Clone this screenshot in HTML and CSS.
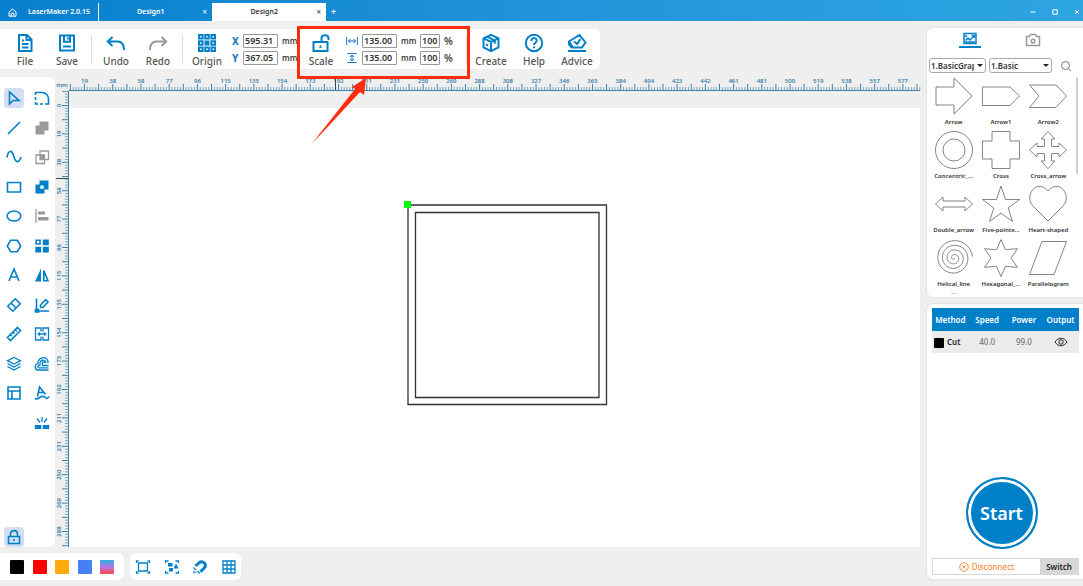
FILE: index.html
```html
<!DOCTYPE html>
<html lang="en">
<head>
<meta charset="utf-8">
<title>LaserMaker 2.0.15</title>
<link rel="stylesheet" href="styles.css">
</head>
<body>
<header class="titlebar">
  <div class="brand"><svg class="home" viewBox="0 0 9 9"><path d="M1 4 4.500 1 8 4v4.200H1zM3.200 8V5.200h2.600V8"/></svg><span>LaserMaker 2.0.15</span></div>
  <nav class="tabs">
    <div class="tab"><span>Design1</span><button class="close" aria-label="Close Design1">×</button></div>
    <div class="tab active"><span>Design2</span><button class="close" aria-label="Close Design2">×</button></div>
    <button class="add" aria-label="New design">+</button>
  </nav>
  <div class="window-buttons">
    <button aria-label="Minimize"><svg viewBox="0 0 6 6"><path d="M.5 3h5"/></svg></button>
    <button aria-label="Maximize"><svg viewBox="0 0 6 6"><path d="M.8.8h4.400v4.400H.8z"/></svg></button>
    <button aria-label="Close"><svg viewBox="0 0 6 6"><path d="m1 1 4 4M5 1 1 5"/></svg></button>
  </div>
</header>

<div class="app">
  <div class="main">
    <div class="toolbar">
      <button class="tool"><svg viewBox="0 0 20 20"><path d="M4 2h8l4.500 4.500V18H4zM11.500 2v5H16M7 7.500h2M7 11h6.500M7 14.500h6.500"/></svg><span>File</span></button>
      <button class="tool"><svg viewBox="0 0 20 20"><path d="M3 2.500h14v15H3zM7 2.500v6.300h6V2.500M10.800 4.500v2M6 13.500h8"/></svg><span>Save</span></button>
      <i class="divider"></i>
      <button class="tool"><svg viewBox="0 0 20 20"><path d="M6.500 4 1.700 8.500l4.800 4.500M2 8.500h9.500c4.500 0 6.500 3 6.500 8.500"/></svg><span>Undo</span></button>
      <button class="tool off"><svg viewBox="0 0 20 20"><path d="M13.500 4l4.800 4.500-4.800 4.500M18 8.500H8.500C4 8.500 2 11.500 2 17"/></svg><span>Redo</span></button>
      <i class="divider"></i>
      <button class="tool"><svg viewBox="0 0 20 20"><path d="M2 2h3.600v3.600H2zM8.200 2h3.600v3.600H8.200zM14.400 2H18v3.600h-3.600zM2 8.200h3.600v3.600H2zM14.400 8.200H18v3.600h-3.600zM2 14.400h3.600V18H2zM8.200 14.400h3.600V18H8.200zM14.400 14.400H18V18h-3.600z"/><path class="solid" d="M7.500 7.500h5v5h-5z"/></svg><span>Origin</span></button>
      <div class="fields position">
        <label for="x" class="axis">X</label><input id="x" value="595.31"><span>mm</span>
        <label for="y" class="axis">Y</label><input id="y" value="367.05"><span>mm</span>
      </div>
      <button class="tool"><svg viewBox="0 0 20 20"><path d="M2.500 9h14v9h-14zM10.500 9V5.500c0-4.500 7-4.500 7 0V7M9.500 12.500v2.500"/></svg><span>Scale</span></button>
      <div class="fields size">
        <label for="w"><svg viewBox="0 0 12 10"><path d="M.7 1v8M11.300 1v8M2.500 5h7M4.500 3l-2 2 2 2M7.500 3l2 2-2 2"/></svg></label><input id="w" value="135.00"><span>mm</span><input aria-label="Width percent" value="100"><span class="percent">%</span>
        <label for="h"><svg viewBox="0 0 12 10"><path d="M1.500 .5h9M1.500 9.500h9M6 2v6M4 4l2-2 2 2M4 6l2 2 2-2"/></svg></label><input id="h" value="135.00"><span>mm</span><input aria-label="Height percent" value="100"><span class="percent">%</span>
      </div>
      <i class="divider"></i>
      <div class="help-tools">
        <button class="tool"><svg viewBox="0 0 20 20"><path d="m10 1.800 7.500 3.500v9L10 18.200l-7.500-3.900v-9zM2.500 5.300 10 9l7.500-3.700M10 9v9M6.200 3.700l7.600 3.800v3.200M5 11.500l2 1"/></svg><span>Create</span></button>
        <button class="tool"><svg viewBox="0 0 20 20"><circle cx="10" cy="10" r="8.200"/><path d="M7.300 8c0-4 5.600-3.600 5.400-.2-.1 1.900-2.700 2-2.700 4.200M10 13.500v1.800"/></svg><span>Help</span></button>
        <button class="tool"><svg viewBox="0 0 20 20"><path d="M1 18h18M6 14.500h9L18.500 9.500 12.500 2 2 8.500zM7 8.500l3.200 2.500L13.500 6M2 8.500v3L5 15"/></svg><span>Advice</span></button>
      </div>
    </div>

    <div class="workspace">
      <aside class="toolbox">
        <div class="toolgrid">
          <button class="selected" aria-label="Select"><svg viewBox="0 0 16 16"><path d="M3.500 2v12l3.700-3.500H13z"/></svg></button>
          <button aria-label="Marquee"><svg viewBox="0 0 16 16"><path d="M1.500 5V2.500H8c4 0 6.500 3 6.500 6.500v5H11M1.500 7v3M1.500 12v2H4M6 14h3"/></svg></button>
          <button aria-label="Line"><svg viewBox="0 0 16 16"><path d="M2 14 14 2"/></svg></button>
          <button class="off" aria-label="Union"><svg viewBox="0 0 16 16"><path class="solid" d="M5.500 1.500h9v9h-4v4h-9v-9h4z"/></svg></button>
          <button aria-label="Curve"><svg viewBox="0 0 16 16"><path d="M1 8.500C2 1 6 .5 7.500 6.500S12.500 16 15 8"/></svg></button>
          <button class="off" aria-label="Intersect"><svg viewBox="0 0 16 16"><path class="thin" d="M6 2h8.500v8.500H6zM2 6h8.500v8.500H2z"/><path class="solid" d="M6 6h4.500v4.500H6z"/></svg></button>
          <button aria-label="Rectangle"><svg viewBox="0 0 16 16"><path d="M1.500 3.500h13v9.500h-13z"/></svg></button>
          <button aria-label="Subtract"><svg viewBox="0 0 16 16"><path class="solid" fill-rule="evenodd" d="M5.500 1.500h9v9h-4v4h-9v-9h4zm.8 5v3.200h3.400V6.500z"/></svg></button>
          <button aria-label="Ellipse"><svg viewBox="0 0 16 16"><ellipse cx="8" cy="8" rx="6.800" ry="5"/></svg></button>
          <button class="off" aria-label="Align"><svg viewBox="0 0 16 16"><path class="thin" d="M2 1v14"/><path class="solid" d="M4 3.500h7v3H4zM4 9h10.500v3.500H4z"/></svg></button>
          <button aria-label="Polygon"><svg viewBox="0 0 16 16"><path d="M4.600 2.300h6.800L14.700 8l-3.300 5.700H4.600L1.300 8z"/></svg></button>
          <button aria-label="Array"><svg viewBox="0 0 16 16"><path d="M2.200 2.200H6V6H2.200z"/><path class="solid" d="M8.800 1.500h6v5.700h-6zM1.300 8.800h5.900v5.700H1.300zM8.800 8.800h6v5.700h-6z"/></svg></button>
          <button aria-label="Text"><svg viewBox="0 0 16 16"><path d="m3 14 5-12 5 12M4.800 10h6.400"/></svg></button>
          <button aria-label="Mirror"><svg viewBox="0 0 16 16"><path class="solid" d="M7 1.500v13H1z"/><path d="M9.800 3.500v10.300H14z"/></svg></button>
          <button aria-label="Eraser"><svg viewBox="0 0 16 16"><path d="m9.200 1.800 5 5-7.400 7.400-5-5zM5 6l5 5"/></svg></button>
          <button aria-label="Edit angle"><svg viewBox="0 0 16 16"><path d="M2.500 1.500V14H15M6.500 10.500V8l5.200-5.300 2.300 2.300L8.800 10.500zM1.500 12.500h3v2.500h-3z"/></svg></button>
          <button aria-label="Measure"><svg viewBox="0 0 16 16"><path d="M11.500 1.500 14.500 4.500 4.500 14.500l-3-3zM9.500 4l1.500 1.500M7 6.200l1.500 1.500M4.500 8.600 6 10"/></svg></button>
          <button aria-label="Join"><svg viewBox="0 0 16 16"><path class="thin" d="M7 5.500V2H1.500v12H7v-3.500M9 5.500V2h5.500v12H9v-3.500M3.500 8h9M5.300 6.300v3.400M10.700 6.300v3.400"/></svg></button>
          <button aria-label="Layers"><svg viewBox="0 0 16 16"><path class="thin" d="m8 1.500 6.500 3.200L8 8 1.500 4.700zM1.500 7.500 8 11l6.500-3.500M1.500 10.500 8 14l6.500-3.500"/></svg></button>
          <button aria-label="Offset"><svg viewBox="0 0 16 16"><path class="thin" d="M14.500 14H4c-3.500 0-3.500-5.500-.2-6.500C4.500 0 14.500-.5 14 7M14.500 11.800H5c-2 0-1.500-2.800 1-2.800C5.300 3 12 2.500 11.800 7.200M14.500 9.500H8.500V6.200h3"/></svg></button>
          <button aria-label="Layout"><svg viewBox="0 0 16 16"><path d="M2 2h12v12H2zM2 6h12M6 6v8"/></svg></button>
          <button aria-label="Text on path"><svg viewBox="0 0 16 16"><path d="M3.500 11.500 5.500 2l6 7.500M4.500 7.500l5-.3M1 13.500c3 2 5-3 8.500-2s2.500 4 5.500 0"/></svg></button>
          <span></span>
          <button aria-label="Break apart"><svg viewBox="0 0 16 16"><path class="thin" d="M8 2v5M3 3.500l3 4M13 3.500l-3 4"/><path class="solid" d="M.8 10h6.500v4H.8zM8.700 10h6.500v4H8.700z"/></svg></button>
        </div>
        <button class="lock selected" aria-label="Lock"><svg viewBox="0 0 16 16"><path d="M2.500 7.500h11v7h-11zM4.500 7.500V5c0-4.500 7-4.500 7 0v2.500M8 10v2"/></svg></button>
      </aside>
      <span class="unit">mm</span>
      <svg class="ruler ruler-x" id="ruler-x"></svg>
      <svg class="ruler ruler-y" id="ruler-y"></svg>
      <div class="canvas">
        <svg class="drawing" viewBox="0 0 206 206"><path d="M5 5h198.500v199.500H5zM12.500 12.500h183.500v185H12.500z"/><path class="handle" d="M1 1h7v7H1z"/></svg>
      </div>
    </div>

    <footer class="bottom">
      <div class="swatches">
        <button class="black" aria-label="Black"></button><button class="red" aria-label="Red"></button><button class="orange" aria-label="Orange"></button><button class="blue" aria-label="Blue"></button><button class="mixed" aria-label="Gradient"></button>
      </div>
      <div class="views">
        <button aria-label="Fit frame"><svg viewBox="0 0 16 16"><path class="thin" d="M3.500 4h9v8h-9z"/><path class="thin" d="M1.500 4V2h2M12.500 2h2v2M1.500 12v2h2M12.500 14h2v-2"/></svg></button>
        <button aria-label="Fit selection"><svg viewBox="0 0 16 16"><path class="thin" d="M1.500 4V2h3M11.500 2h3v2M1.500 12v2h3M11.500 14h3v-2"/><path class="solid" d="M4 4h4.500v3.500H4zM12 4.500l2.500 5H9.500zM5 9h4v3.500H5z"/></svg></button>
        <button aria-label="Snap"><svg viewBox="0 0 16 16"><path class="thick" d="M3.500 7 7 3.800C11 1 15.500 5.500 12 9.300l-3.500 3.500"/><path class="thin" d="M1.500 8.500 4 11M5.500 12l2.500 2.500M2 12v2.500M3.500 13h1"/></svg></button>
        <button aria-label="Grid"><svg viewBox="0 0 16 16"><path class="thin" d="M2 2h12v12H2zM2 6h12M2 10h12M6 2v12M10 2v12"/></svg></button>
      </div>
    </footer>
  </div>

  <div class="side">
    <section class="panel library">
      <div class="modes">
        <button class="mode active" aria-label="Graphics"><svg viewBox="0 0 16 14"><path d="M2 1.500h12v10H2z"/><path d="m3.500 8.500 2.500-2.500 2 2 4-4M9.500 3.500H12.500V6M3 3.500l2 1M3 10h10"/></svg></button>
        <button class="mode" aria-label="Camera"><svg viewBox="0 0 16 14"><path d="M1.500 3.500H4.500L5.500 1.500h5l1 2h3v9h-13z"/><circle cx="8" cy="8" r="1.800"/></svg></button>
      </div>
      <div class="filters">
        <span class="select narrow"><select aria-label="Category"><option>1.BasicGraphics</option></select></span>
        <span class="select wide"><select aria-label="Subcategory"><option>1.Basic</option></select></span>
        <button aria-label="Search"><svg viewBox="0 0 12 12"><circle cx="5.500" cy="5.500" r="4"/><path d="m8.500 8.500 2.500 2.500"/></svg></button>
      </div>
      <div class="shapes">
        <button><svg viewBox="0 0 38 38"><path d="M1 10h18V1l18 18-18 18V28H1z"/></svg><span>Arrow</span></button>
        <button><svg viewBox="0 0 38 38"><path d="M.5 10H28l9.500 9L28 28.500H.5z"/></svg><span>Arrow1</span></button>
        <button><svg viewBox="0 0 38 38"><path d="M.5 8H27l10.500 11L27 30.500H.5L10 19z"/></svg><span>Arrow2</span></button>
        <button><svg viewBox="0 0 38 38"><circle cx="19" cy="19" r="18.500"/><circle cx="19" cy="19" r="11"/></svg><span>Concentric_...</span></button>
        <button><svg viewBox="0 0 38 38"><path d="M10 .5h18v9.500h9.500v18H28v9.500H10V28H.5V10H10z"/></svg><span>Cross</span></button>
        <button><svg viewBox="0 0 38 38"><path d="m19 .5 7 7.500h-3.500v7.500H30V12l7.500 7-7.500 7v-3.500h-7.500V30H26l-7 7.500-7-7.500h3.500v-7.500H8V26L.5 19 8 12v3.500h7.500V8H12z"/></svg><span>Cross_arrow</span></button>
        <button><svg viewBox="0 0 38 38"><path d="M.5 19 8 12v4h22v-4l7.500 7-7.500 7v-4H8v4z"/></svg><span>Double_arrow</span></button>
        <button><svg viewBox="0 0 38 38"><path d="m19 1 4.500 13.500h14L26.200 23l4.300 13.500L19 28.200 7.500 36.500 11.800 23 .5 14.500h14z"/></svg><span>Five-pointe...</span></button>
        <button><svg viewBox="0 0 38 38"><path d="M19 36 3.500 20.500C-3 12 3 2 10 1.500c5 0 7 2 9 4.500 2-2.500 4-4.500 9-4.500 7 .5 13 10.500 6.500 19z"/></svg><span>Heart-shaped</span></button>
        <button><svg viewBox="0 0 38 38"><path id="spiral" d=""/></svg><span>Helical_line</span></button>
        <button><svg viewBox="0 0 38 38"><path d="m19 .5 4.500 10.200 12-1L29 19l6.500 9.300-12-1L19 37.500l-4.500-10.200-12 1L9 19 2.500 9.700l12 1z"/></svg><span>Hexagonal_...</span></button>
        <button><svg viewBox="0 0 38 38"><path d="M13 2.500h24.500L25 35.500H.5z"/></svg><span>Parallelogram</span></button>
        <button aria-label="Circle"><svg viewBox="0 0 38 38"><circle cx="19" cy="19" r="18"/></svg></button>
        <span></span>
        <button aria-label="Pentagon"><svg viewBox="0 0 38 38"><path d="m19 1 18 13-7 22H8L1 14z"/></svg></button>
      </div>
      <i class="scroll"></i>
    </section>
    <section class="panel job">
      <table>
        <thead><tr><th>Method</th><th>Speed</th><th>Power</th><th>Output</th></tr></thead>
        <tbody><tr><td class="method"><i></i>Cut</td><td>40.0</td><td>99.0</td><td><svg class="eye" viewBox="0 0 14 10"><path d="M1 5c3-5 9-5 12 0-3 5-9 5-12 0z"/><circle cx="7" cy="5" r="2.200"/></svg></td></tr></tbody>
      </table>
      <button class="start">Start</button>
      <div class="connection">
        <button class="disconnect"><svg viewBox="0 0 10 10"><circle cx="5" cy="5" r="4.200"/><path d="m3.300 3.300 3.400 3.400M6.700 3.300 3.300 6.700"/></svg>Disconnect</button>
        <button class="switch">Switch</button>
      </div>
    </section>
  </div>
</div>

<div class="highlight"></div>
<svg class="pointer" viewBox="0 0 60 72"><defs><linearGradient id="fade" x1="0" y1="1" x2="1" y2="0"><stop offset="0" stop-color="#ff2d0c" stop-opacity=".2"/><stop offset=".15" stop-color="#ff2d0c"/></linearGradient></defs><path fill="url(#fade)" d="M1 69 46 12 43 10 57 1 55 18 51 15z"/></svg>
<script src="rulers.js"></script>
</body>
</html>
```
FILE: styles.css
```css
* { box-sizing: border-box; }
:root { --blue: #0080c9; --grey: #999; --bg: #efefef; }
body { margin: 0; min-height: 100vh; display: flex; flex-direction: column; background: var(--bg); color: #333; font: 600 9px/12px "Noto Sans", sans-serif; overflow: hidden; position: relative; }
button { border: 0; padding: 0; margin: 0; background: none; color: inherit; font: inherit; display: flex; align-items: center; justify-content: center; }
svg { fill: none; stroke: currentColor; display: block; flex: none; }
svg .solid { fill: currentColor; stroke: none; }
svg .thin { stroke-width: 1.300; }
svg .thick { stroke-width: 3; }

.titlebar { height: 21px; padding-top: 3px; display: flex; background: linear-gradient(90deg, #087fce, #2196da 55%, #2da5e1); color: #fff; font-size: 7px; }
.brand { width: 99px; padding-left: 8px; display: flex; align-items: center; gap: 11px; border-right: 1px solid #fff; white-space: nowrap; }
.home { width: 9px; height: 9px; }
.tabs { flex: 1; display: flex; }
.tab { width: 113px; padding-right: 5px; display: flex; align-items: center; }
.tab span { flex: 1; text-align: center; }
.tab .close { font-size: 8px; font-weight: 400; line-height: 12px; }
.tab.active { width: 114px; background: #fff; color: #333; }
.add { width: 15px; font-size: 9px; }
.window-buttons { display: flex; gap: 16px; padding-right: 3px; }
.window-buttons svg { width: 6px; height: 6px; }

.app { flex: 1; display: flex; gap: 7px; }
.main { flex: 1; min-width: 0; display: flex; flex-direction: column; padding: 8px 0 6px; }
.toolbar { align-self: flex-start; height: 40px; display: flex; align-items: center; background: #fff; border-radius: 0 6px 6px 0; padding: 0 2px 0 4px; }
.tool { width: 42px; padding-top: 3px; flex-direction: column; gap: 2px; color: var(--blue); }
.tool svg { width: 20px; height: 20px; stroke-width: 2; }
.tool span { color: #555; font-size: 10px; font-weight: 500; line-height: 13px; }
.tool.off { color: var(--grey); }
.divider { width: 1px; height: 28px; margin: 0 3px; background: #ddd; }
.help-tools { display: flex; gap: 1px; }
.fields { display: grid; align-items: center; row-gap: 3px; column-gap: 4px; color: #444; }
.fields input { width: 100%; height: 14px; padding: 0 1px; border: 1px solid #999; border-radius: 1px; background: #fff; color: #333; font: inherit; }
.fields label { color: #1371bd; font-size: 10px; font-weight: 700; }
.fields label svg { width: 12px; height: 10px; }
.fields span { font-size: 8px; }
.fields .percent { font-size: 10px; }
.position { grid-template-columns: 7px 35px 15px; margin: 0 3px 0 4px; }
.size { grid-template-columns: 12px 35px 15px 20px 10px; margin: 0 9px 0 4px; }

.workspace { flex: 1; margin-top: 8px; display: grid; grid-template-columns: 55px 14px 1fr; grid-template-rows: 14px 1fr; }
.toolbox { grid-row: 1 / 3; background: #fff; border-radius: 0 6px 6px 0; padding: 11px 4px 0; display: flex; flex-direction: column; color: var(--blue); }
.toolgrid { flex: 1; margin-bottom: 94px; display: grid; grid-template-columns: 20px 20px; grid-auto-rows: 20px; column-gap: 8px; align-content: space-between; }
.toolbox button { width: 20px; height: 20px; border-radius: 4px; }
.toolbox svg { width: 16px; height: 16px; stroke-width: 1.600; }
.toolbox .selected { background: #d3dff0; }
.toolbox .off { color: var(--grey); }
.unit { color: #387ca5; font-size: 6px; line-height: 16px; text-align: center; }
.ruler { color: #3b81a9; font-size: 6px; font-weight: 600; }
.ruler text { fill: currentColor; stroke: none; text-anchor: middle; }
.ruler .cursor { stroke: #444; }
.ruler-x { width: 100%; height: 14px; overflow: visible; }
.ruler-y { width: 14px; height: 100%; }
.canvas { background: #fff; border-top: 17px solid var(--bg); position: relative; }
.drawing { position: absolute; left: 334px; top: 92px; width: 206px; height: 206px; stroke: #333; stroke-width: 1.300; }
.drawing .handle { fill: #00ff0c; stroke: none; }

.bottom { display: flex; gap: 6px; margin-top: 6px; }
.bottom > div { height: 27px; background: #fff; display: flex; justify-content: space-between; align-items: center; }
.swatches { width: 124px; padding: 0 10px; border-radius: 0 6px 6px 0; }
.swatches button { width: 14px; height: 14px; border-radius: 1px; }
.black { background: #000; }
.red { background: #f00; }
.orange { background: #ffaa0d; }
.blue { background: #4580f5; }
.mixed { background: linear-gradient(#2ab0e0, #b277e3 50%, #ff4648); }
.views { width: 111px; padding: 0 4px 0 5px; border-radius: 6px; color: var(--blue); }
.views svg { width: 16px; height: 16px; }

.side { width: 156px; padding: 7px 0; display: flex; flex-direction: column; gap: 7px; }
.panel { background: #fff; border-radius: 6px 0 0 6px; box-shadow: 0 0 2px #ccc; }
.library { height: 269px; padding-bottom: 3px; position: relative; display: flex; flex-direction: column; }
.modes { display: flex; gap: 41px; padding-left: 32px; }
.mode { width: 22px; height: 20px; padding-top: 4px; color: var(--grey); }
.mode svg { width: 16px; height: 14px; stroke-width: 1.500; }
.mode.active { color: var(--blue); border-bottom: 2px solid; }
.filters { margin-top: 10px; padding: 0 7px 0 2px; display: flex; align-items: center; gap: 3px; }
.select { position: relative; }
.select::after { content: ""; position: absolute; right: 3px; top: 6px; border: 3px solid transparent; border-top-color: #222; border-bottom: 0; }
.select select { appearance: none; display: block; width: 100%; height: 15px; padding: 0 11px 0 1px; border: 1px solid #aaa; border-radius: 3px; background: #fff; color: #333; font: 600 8px/12px "Noto Sans", sans-serif; }
.narrow { width: 57px; }
.wide { width: 63px; }
.filters button { flex: 1; color: #777; }
.filters svg { width: 12px; height: 12px; }
.shapes { flex: 1; min-height: 0; overflow: hidden; padding: 4px 11px 0 3px; display: grid; grid-template-columns: repeat(3, 1fr); grid-auto-rows: 51px; align-content: start; row-gap: 3px; color: #333; }
.shapes button { flex-direction: column; justify-content: flex-start; gap: 2px; min-width: 0; }
.shapes svg { width: 38px; height: 38px; color: #666; stroke-width: .8; }
.shapes button span { font-size: 6px; line-height: 11px; white-space: nowrap; }
.scroll { position: absolute; right: 5px; top: 49px; width: 2px; height: 97px; background: #ccc; border-radius: 1px; }

.job { flex: 1; padding: 4px 4px 4px 5px; display: flex; flex-direction: column; }
table { width: 100%; border-collapse: collapse; table-layout: fixed; text-align: center; font-size: 8px; }
th, td { padding: 0; height: 23px; }
th { background: var(--blue); color: #fff; font-weight: 600; }
td { height: 22px; background: #ebebeb; color: #777; font-weight: 500; }
.method { color: #222; font-weight: 600; text-align: left; }
.method i { display: inline-block; width: 10px; height: 10px; margin: 0 3px 0 2px; background: #000; border-radius: 1px; vertical-align: middle; }
.eye { width: 14px; height: 10px; margin: 0 auto; color: #222; }
.start { align-self: center; width: 72px; height: 72px; margin: auto 8px 9px 0; border-radius: 50%; border: 2px solid var(--blue); box-shadow: inset 0 0 0 3px #fff; background: var(--blue); color: #fff; font-size: 18px; line-height: 24px; }
.connection { height: 17px; display: flex; border: 1px solid #d7d7d7; }
.disconnect { flex: 1; gap: 3px; color: #f58a3c; font-size: 8px; font-weight: 500; }
.disconnect svg { width: 10px; height: 10px; }
.switch { width: 38px; background: #d7d7d7; color: #222; font-size: 8px; }

.highlight { position: absolute; left: 297px; top: 26px; width: 173px; height: 53px; border: 3px solid #ff2d0c; }
.pointer { position: absolute; left: 309px; top: 77px; width: 60px; height: 72px; stroke: none; }
```
FILE: rulers.js
```js
const NS = 'http://www.w3.org/2000/svg';

function add(svg, name, attrs, text) {
  const el = document.createElementNS(NS, name);
  for (const key in attrs) el.setAttribute(key, attrs[key]);
  if (text !== undefined) el.textContent = text;
  svg.append(el);
}

// zero: pixel position of the origin; step: pixels between two labels
function ruler(id, vertical, zero, step, cursor) {
  const svg = document.getElementById(id);
  svg.replaceChildren();
  const box = svg.getBoundingClientRect();
  const length = vertical ? box.height : box.width;
  let major = '';
  let minor = '';
  for (let i = Math.ceil(-zero * 10 / step); zero + i * step / 10 < length; i++) {
    const p = zero + i * step / 10;
    const size = i % 5 === 0 ? 6 : 3;
    const line = vertical ? `M${13 - size} ${p}h${size}` : `M${p} ${13 - size}v${size}`;
    if (size === 6) major += line; else minor += line;
    if (i % 10 === 0) {
      const label = Math.round(i / 10 * 19.221);
      if (vertical) add(svg, 'text', { transform: `translate(6 ${p}) rotate(-90)` }, label);
      else if (p > 10) add(svg, 'text', { x: p, y: 6 }, label);
    }
  }
  add(svg, 'path', { d: major });
  add(svg, 'path', { d: minor, 'stroke-opacity': 0.65 });
  add(svg, 'path', { d: vertical ? `M13.5 0V${length}` : `M0 13.5H${length}` });
  add(svg, 'path', { class: 'cursor', d: vertical ? `M1 ${cursor}h12` : `M${cursor} 1v12` });
}

function drawRulers() {
  ruler('ruler-x', false, -12.7, 28.22, 266.5);
  ruler('ruler-y', true, 14.5, 28.4, 87.5);
}

function drawSpiral() {
  const end = 8 * Math.PI;
  let d = '';
  for (let a = 0; a <= end; a += 0.15) {
    const r = 18.5 * a / end;
    d += `${d ? 'L' : 'M'}${(19 + r * Math.cos(a)).toFixed(2)} ${(19 + r * Math.sin(a)).toFixed(2)}`;
  }
  document.getElementById('spiral').setAttribute('d', d);
}

drawRulers();
drawSpiral();
window.addEventListener('resize', drawRulers);
```
